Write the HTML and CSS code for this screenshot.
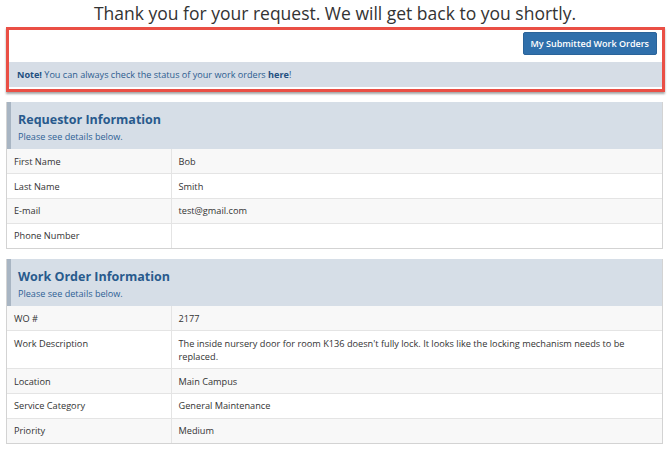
FILE: index.html
```html
<!DOCTYPE html>
<html>
<head>
<meta charset="utf-8">
<link rel="stylesheet" href="styles.css">
</head>
<body>
<h1 class="title">Thank you for your request. We will get back to you shortly.</h1>
<div class="alert-box">
  <div class="alert-top">
    <a class="btn" href="#">My Submitted Work Orders</a>
  </div>
  <div class="note"><b>Note!</b> You can always check the status of your work orders <b>here</b>!</div>
</div>

<div class="panel">
  <div class="panel-head">
    <div class="panel-title">Requestor Information</div>
    <div class="panel-sub">Please see details below.</div>
  </div>
  <table class="info">
    <tr><td class="lbl">First Name</td><td>Bob</td></tr>
    <tr><td class="lbl">Last Name</td><td>Smith</td></tr>
    <tr><td class="lbl">E-mail</td><td>test@gmail.com</td></tr>
    <tr><td class="lbl">Phone Number</td><td></td></tr>
  </table>
</div>

<div class="panel panel-2">
  <div class="panel-head">
    <div class="panel-title">Work Order Information</div>
    <div class="panel-sub">Please see details below.</div>
  </div>
  <table class="info">
    <tr><td class="lbl">WO #</td><td>2177</td></tr>
    <tr class="tall"><td class="lbl">Work Description</td><td>The inside nursery door for room K136 doesn't fully lock. It looks like the locking mechanism needs to be replaced.</td></tr>
    <tr><td class="lbl">Location</td><td>Main Campus</td></tr>
    <tr><td class="lbl">Service Category</td><td>General Maintenance</td></tr>
    <tr><td class="lbl">Priority</td><td>Medium</td></tr>
  </table>
</div>
</body>
</html>
```
FILE: styles.css
```css
* { box-sizing: border-box; }
html, body { margin: 0; padding: 0; background: #fff; }
body {
  font-family: "Open Sans", "Liberation Sans", sans-serif;
  color: #333;
  width: 670px;
}
.title {
  margin: 0;
  height: 27px;
  line-height: 27px;
  font-size: 17.5px;
  font-weight: 400;
  text-align: center;
  color: #333;
}
.alert-box {
  margin: 0 5px 0 6px;
  border: 3px solid #ea4f45;
  box-shadow: 0 2px 2px rgba(0,0,0,0.35);
  background: #fff;
  padding-bottom: 2px;
}
.alert-top {
  height: 32px;
  display: flex;
  justify-content: flex-end;
  align-items: flex-start;
  padding: 2px 5px 0 0;
}
.btn {
  display: block;
  background: #2f6fab;
  color: #fff;
  font-size: 9px;
  font-weight: 600;
  text-decoration: none;
  height: 23px;
  line-height: 21px;
  padding: 0 7px;
  border: 1px solid #2a6399;
  border-radius: 2px;
}
.note {
  background: #d6dde6;
  height: 25px;
  line-height: 25px;
  padding-left: 8px;
  font-size: 9.1px;
  color: #2c5c8f;
}
.note b { font-weight: 700; color: #234f80; }
.panel {
  margin: 10px 7px 0 6px;
  border: 1px solid #d3d3d3;
  border-top: none;
}
.panel-2 { margin-top: 10px; }
.panel-head {
  background: #d6dee7;
  border-left: 4px solid #a8b5c3;
  height: 47px;
  padding: 9px 0 0 7px;
}
.panel-title {
  font-size: 12.5px;
  font-weight: 700;
  color: #285a8d;
  line-height: 17px;
}
.panel-sub {
  font-size: 9.1px;
  color: #2e6195;
  line-height: 14px;
  margin-top: 2px;
}
.info {
  width: 100%;
  border-collapse: collapse;
  font-size: 9.2px;
  color: #333;
}
.info td {
  height: 24.75px;
  padding: 4px 7px;
  vertical-align: middle;
  border-top: 1px solid #e4e4e4;
  line-height: 13px;
}
.info tr:first-child td { border-top: none; }
.info tr:nth-child(odd) td { background: #f8f8f8; }
.info td.lbl {
  width: 164px;
  border-right: 1px solid #e4e4e4;
}
.info tr.tall td { height: 38px; vertical-align: top; padding-top: 6px; }
```
